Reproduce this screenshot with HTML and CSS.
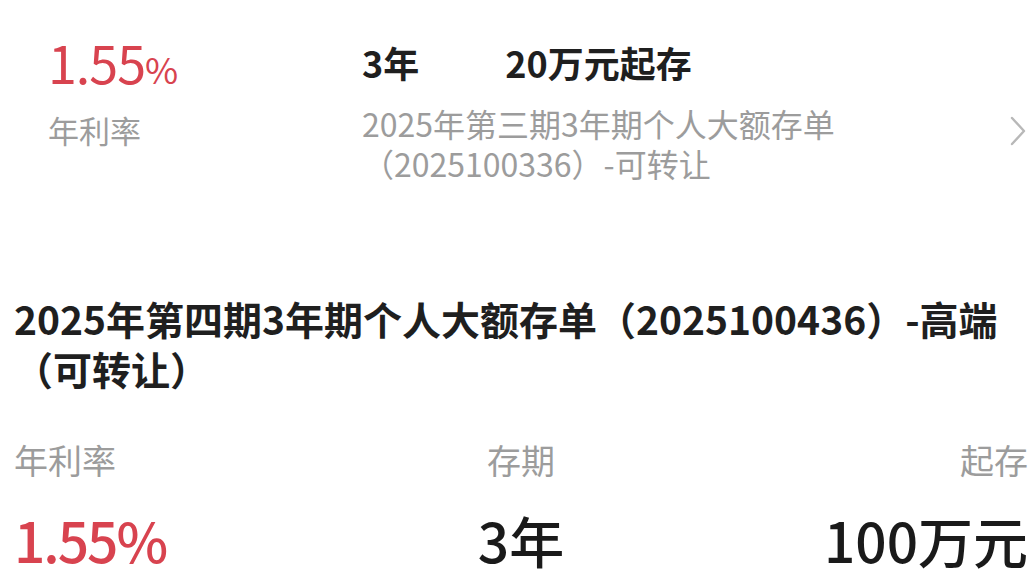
FILE: index.html
```html
<!DOCTYPE html>
<html lang="zh-CN">
<head>
  <meta charset="UTF-8">
  <meta name="viewport" content="width=device-width, initial-scale=1.0">
  <title>大额存单</title>
  <link rel="stylesheet" href="styles.css">
</head>
<body>
  <div class="list">
    <!-- 列表项：第三期 -->
    <div class="deposit-row">
      <div class="rate-col">
        <div class="rate">1.55<small>%</small></div>
        <div class="rate-label">年利率</div>
      </div>
      <div class="info-col">
        <div class="info-main">
          <span>3年</span>
          <span>20万元起存</span>
        </div>
        <div class="info-name">2025年第三期3年期个人大额存单<br>（2025100336）-可转让</div>
      </div>
      <svg class="chevron" width="20" height="34" viewBox="0 0 20 34">
        <polyline points="4,4 16,17 4,30" fill="none" stroke="#b8b8b8" stroke-width="2.4" stroke-linecap="round" stroke-linejoin="round"/>
      </svg>
    </div>

    <!-- 详情：第四期 -->
    <div class="product">
      <h2 class="product-title">2025年第四期3年期个人大额存单（2025100436）-高端<br>（可转让）</h2>
      <div class="stats">
        <div class="stat">
          <div class="stat-label">年利率</div>
          <div class="stat-value red">1.55%</div>
        </div>
        <div class="stat center">
          <div class="stat-label">存期</div>
          <div class="stat-value">3年</div>
        </div>
        <div class="stat right">
          <div class="stat-label">起存</div>
          <div class="stat-value">100万元</div>
        </div>
      </div>
    </div>
  </div>
</body>
</html>
```

FILE: styles.css
```css
*{margin:0;padding:0;box-sizing:border-box;}
body{font-family:"Noto Sans CJK SC","Noto Sans",sans-serif;color:#1f1f1f;background:#fff;}
.list{padding:0 7px 0 14px;}

.deposit-row{display:flex;padding-top:32px;}
.rate-col{width:348px;padding-left:34px;}
.rate{font-size:52px;line-height:60px;color:#d8434f;letter-spacing:-1px;}
.rate small{font-size:36px;}
.rate-label{margin-top:12px;font-size:31px;line-height:40px;color:#9c9c9c;}
.info-col{flex:1;}
.info-main{display:flex;gap:86px;font-size:36px;line-height:60px;font-weight:700;color:#1f1f1f;}
.info-name{margin-top:11px;font-size:32px;line-height:40px;color:#9c9c9c;}
.chevron{align-self:flex-start;margin-top:82px;}

.product{margin-top:110px;}
.product-title{font-size:39px;line-height:50px;font-weight:700;color:#1f1f1f;}
.stats{display:grid;grid-template-columns:1fr 1fr 1fr;margin-top:45px;}
.stat-label{font-size:34px;line-height:44px;color:#9c9c9c;}
.stat-value{margin-top:25px;font-size:55px;line-height:64px;font-weight:500;color:#1a1a1a;}
.stat-value.red{color:#d8434f;letter-spacing:-2px;}
.stat.center{text-align:center;}
.stat.right{text-align:right;}
```
